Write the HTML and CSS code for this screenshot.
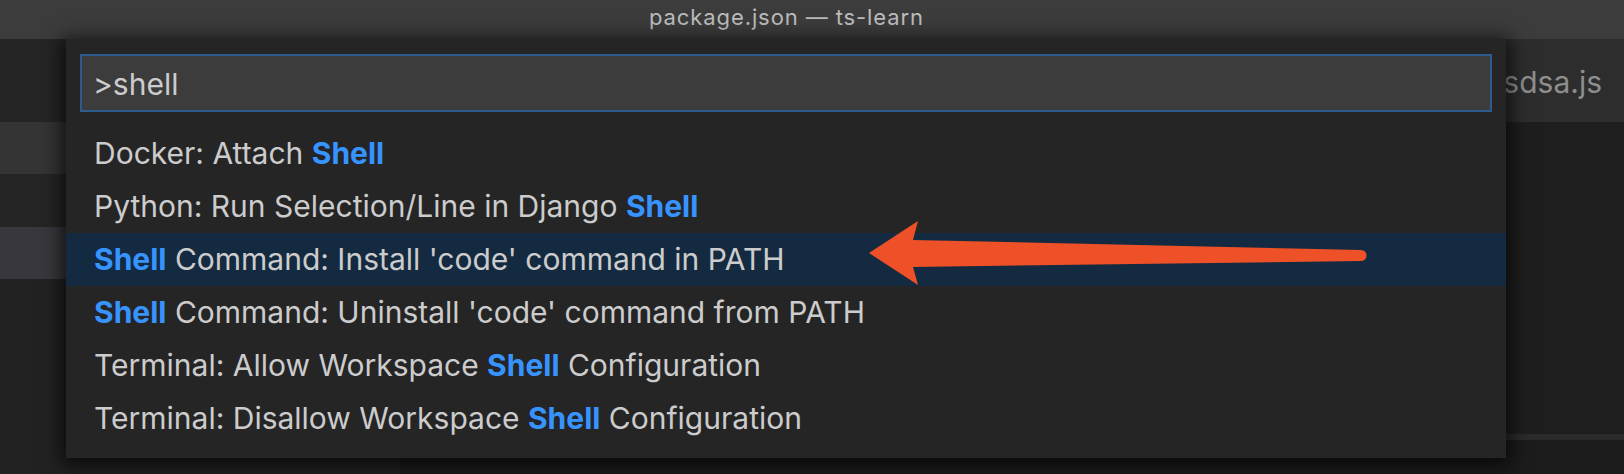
FILE: index.html
```html
<!DOCTYPE html>
<html lang="en">
<head>
<meta charset="utf-8">
<title>package.json — ts-learn</title>
<link rel="stylesheet" href="styles.css">
</head>
<body>
<div class="window">
  <header class="titlebar"><span class="title">package.json — ts-learn</span></header>
  <div class="main">
    <aside class="sidebar">
      <div class="side-head"></div>
      <div class="side-row side-row-light"></div>
      <div class="side-row"></div>
      <div class="side-row side-row-sel"></div>
      <div class="side-rest"></div>
    </aside>
    <section class="editor">
      <div class="tabs">
        <div class="tab">sdsa.js</div>
      </div>
      <div class="editor-body"></div>
      <div class="editor-rule"></div>
      <div class="editor-foot"></div>
    </section>
  </div>

  <div class="quick-input">
    <div class="qi-box"><span class="qi-text">&gt;shell</span></div>
    <ul class="qi-list">
      <li class="qi-row">Docker: Attach <b class="hl">Shell</b></li>
      <li class="qi-row">Python: Run Selection/Line in Django <b class="hl">Shell</b></li>
      <li class="qi-row qi-row-sel"><b class="hl">Shell</b> Command: Install 'code' command in PATH</li>
      <li class="qi-row"><b class="hl">Shell</b> Command: Uninstall 'code' command from PATH</li>
      <li class="qi-row">Terminal: Allow Workspace <b class="hl">Shell</b> Configuration</li>
      <li class="qi-row">Terminal: Disallow Workspace <b class="hl">Shell</b> Configuration</li>
    </ul>
  </div>

  <svg class="arrow" width="520" height="80" viewBox="0 0 520 80" aria-hidden="true">
    <path d="M9 38 L58 6 L53 25 L501 35 A5.5 5.5 0 0 1 501 46 L53 52 L58 70 Z" fill="#ee5127"/>
  </svg>
</div>
</body>
</html>
```

FILE: styles.css
```css
* { box-sizing: border-box; }
html, body { margin: 0; padding: 0; }
body {
  width: 1624px;
  height: 474px;
  overflow: hidden;
  background: #1e1e1e;
  font-family: Inter, "Liberation Sans", sans-serif;
}
.window {
  position: relative;
  width: 1624px;
  height: 474px;
  display: flex;
  flex-direction: column;
}
.titlebar {
  height: 39px;
  flex: none;
  background: #3c3c3c;
  display: flex;
  align-items: center;
  padding-left: 649px;
  padding-bottom: 5px;
}
.title {
  color: #bcbcbc;
  font-size: 22px;
  letter-spacing: 0.9px;
  line-height: 1;
}
.main {
  flex: 1;
  display: flex;
  min-height: 0;
}
.sidebar {
  width: 400px;
  flex: none;
  display: flex;
  flex-direction: column;
  background: #222222;
}
.side-head { height: 83px; background: #252526; }
.side-row { height: 53px; background: #252526; }
.side-row-light { height: 52px; background: #343434; }
.side-row-sel { height: 52px; background: #37373d; }
.side-rest { flex: 1; background: #222222; }

.editor {
  flex: 1;
  display: flex;
  flex-direction: column;
  background: #1e1e1e;
}
.tabs {
  height: 83px;
  flex: none;
  background: #252526;
  display: flex;
  justify-content: flex-end;
}
.tab {
  background: #2d2d2d;
  width: 330px;
  color: #8e8e8e;
  font-size: 30px;
  display: flex;
  align-items: center;
  justify-content: flex-end;
  padding-right: 22px;
  padding-top: 2px;
}
.editor-body { flex: 1; background: #1e1e1e; }
.editor-rule { height: 6px; flex: none; background: #2b2b2b; }
.editor-foot { height: 34px; flex: none; background: #1c1c1c; }

.quick-input {
  position: absolute;
  left: 66px;
  top: 39px;
  width: 1440px;
  height: 419px;
  background: #252526;
  box-shadow: 0 4px 18px 5px rgba(0, 0, 0, 0.65);
  padding-top: 15px;
}
.qi-box {
  margin: 0 14px;
  height: 58px;
  border: 2px solid #2d5c8c;
  background: #3c3c3c;
  display: flex;
  align-items: center;
  padding-left: 11px;
}
.qi-text {
  color: #cccccc;
  font-size: 30px;
  padding-top: 2px;
}
.qi-list {
  list-style: none;
  margin: 15px 0 0;
  padding: 0;
}
.qi-row {
  height: 53px;
  line-height: 53px;
  padding-left: 28px;
  color: #cccccc;
  font-size: 30px;
  white-space: nowrap;
}
.qi-row-sel { background: #142a40; }
.hl { color: #3794ff; font-weight: 700; }

.arrow {
  position: absolute;
  left: 860px;
  top: 215px;
}
```
